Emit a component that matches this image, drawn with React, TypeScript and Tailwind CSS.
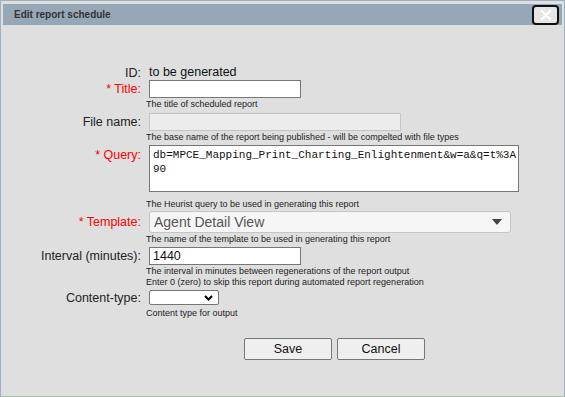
import React from 'react';

const sans = "font-['Liberation_Sans',Arial,sans-serif]";

function Label({ text, required }: { text: string; required?: boolean }) {
  return (
    <div className={`w-[142px] shrink-0 pr-[1px] text-right text-[12.5px] leading-[16px] ${required ? 'text-[#ff0000]' : 'text-[#222]'}`}>
      {required && '* '}
      {text}:
    </div>
  );
}

function Help({ children }: { children: React.ReactNode }) {
  return <div className="pl-[146px] text-[9px] leading-[12px] text-[#222]">{children}</div>;
}

export default function App() {
  return (
    <div className={`${sans} relative h-[397px] w-[565px] border border-[#9fb0c2] border-b-[#a8c0a8] bg-[#dfdfdf] px-[2px] pt-[3px]`}>
      {/* title bar */}
      <div className="flex h-[21px] items-center justify-between bg-[#96a7b7] pl-[11px] pr-[3px]">
        <span className="text-[10px] font-bold text-[#333]">Edit report schedule</span>
        <button className="flex h-[20px] w-[27px] items-center justify-center rounded-[4px] border-2 border-[#111] bg-[#e6e6e6]">
          <svg width="12" height="10" viewBox="0 0 12 10">
            <path d="M2 1 L10 9 M10 1 L2 9" stroke="#fff" strokeWidth="2.4" strokeLinecap="round" />
          </svg>
        </button>
      </div>

      <div className="-ml-[3px]">
        {/* ID */}
        <div className="mt-[40px] flex h-[15px] items-center">
          <Label text="ID" />
          <span className="pl-[7px] text-[12.5px] text-[#111]">to be generated</span>
        </div>

        {/* Title */}
        <div className="flex h-[18px] items-center">
          <Label text="Title" required />
          <div className="ml-[7px] h-[18px] w-[152px] border border-[#767676] bg-white" />
        </div>
        <Help>The title of scheduled report</Help>

        {/* File name */}
        <div className="mt-[3px] flex h-[18px] items-center">
          <Label text="File name" />
          <div className="ml-[7px] h-[18px] w-[252px] border border-[#c4c4c4] bg-[#ececec]" />
        </div>
        <Help>The base name of the report being published - will be compelted with file types</Help>

        {/* Query */}
        <div className="mt-[2px] flex h-[47px] items-start">
          <div className="pt-[2px]">
            <Label text="Query" required />
          </div>
          <div className="ml-[7px] h-[47px] w-[370px] overflow-hidden whitespace-pre border border-[#767676] bg-white pl-[3px] pt-[2px] font-['Liberation_Mono','DejaVu_Sans_Mono',monospace] text-[11px] leading-[14px] text-[#111]">
            {'db=MPCE_Mapping_Print_Charting_Enlightenment&w=a&q=t%3A\n90'}
          </div>
        </div>
        <Help>
          <div className="mt-[6px]">The Heurist query to be used in generating this report</div>
        </Help>

        {/* Template */}
        <div className="flex h-[23px] items-center">
          <Label text="Template" required />
          <div className="ml-[7px] mt-[1px] flex h-[22px] w-[362px] items-center justify-between rounded-[3px] border border-[#c5c5c5] bg-[#f6f6f6] pl-[4px] pr-[8px]">
            <span className="text-[14px] text-[#555]">Agent Detail View</span>
            <svg width="10" height="6" viewBox="0 0 10 6">
              <path d="M0 0 L10 0 L5 6 Z" fill="#444" />
            </svg>
          </div>
        </div>
        <Help>The name of the template to be used in generating this report</Help>

        {/* Interval */}
        <div className="mt-[2px] flex h-[18px] items-center">
          <Label text="Interval (minutes)" />
          <div className="ml-[7px] flex h-[18px] w-[152px] items-center border border-[#767676] bg-white pl-[3px] text-[12.5px] text-[#111]">
            1440
          </div>
        </div>
        <div className="mt-[1px] pl-[146px] text-[9px] leading-[11px] text-[#222]">
          The interval in minutes between regenerations of the report output
          <br />
          Enter 0 (zero) to skip this report during automated report regeneration
        </div>

        {/* Content-type */}
        <div className="mt-[2px] flex h-[15px] items-center">
          <Label text="Content-type" />
          <div className="ml-[7px] flex h-[15px] w-[70px] items-center justify-end rounded-[2px] border border-[#767676] bg-white pr-[5px]">
            <svg width="9" height="6" viewBox="0 0 9 6">
              <path d="M1 1 L4.5 4.5 L8 1" stroke="#000" strokeWidth="2" fill="none" />
            </svg>
          </div>
        </div>
        <Help>
          <div className="mt-[2px]">Content type for output</div>
        </Help>

        {/* Buttons */}
        <div className="mt-[19px] flex gap-[5px] pl-[244px]">
          <button className="h-[22px] w-[88px] rounded-[2px] border border-[#767676] bg-[#efefef] text-[12.5px] text-[#111]">Save</button>
          <button className="h-[22px] w-[88px] rounded-[2px] border border-[#767676] bg-[#efefef] text-[12.5px] text-[#111]">Cancel</button>
        </div>
      </div>
    </div>
  );
}
